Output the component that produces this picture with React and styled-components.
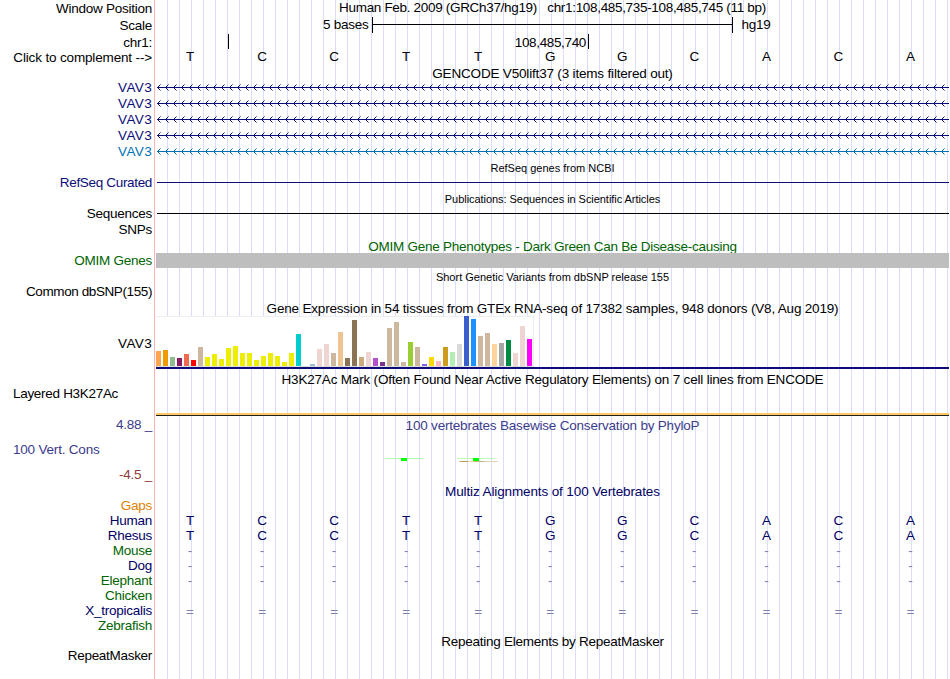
import React from "react";
import styled, { createGlobalStyle } from "styled-components";

const GlobalStyle = createGlobalStyle`
  body {
    margin: 0;
    background: #fff;
    font-family: "Liberation Sans", Arial, Helvetica, sans-serif;
    font-size: 13.5px;
    color: #000;
  }
`;

const Browser = styled.main`
  width: 949px;
  height: 679px;
  overflow: hidden;
  background: linear-gradient(#ffb4b4, #ffb4b4) 154px 0 / 1px 100% no-repeat,
    repeating-linear-gradient(to right, #dcdcff 0 1px, transparent 1px 12px)
      167px 0 / 782px 100% no-repeat;
`;

const Row = styled.div`
  display: grid;
  grid-template-columns: 156px 793px;
  height: ${p => p.$h}px;
  line-height: ${p => p.$h}px;
  white-space: pre;
`;

const Label = styled.div`
  padding: 0 4px 0 13px;
  text-align: ${p => (p.$left ? "left" : "right")};
  color: ${p => p.$color || "#000"};
  letter-spacing: ${p => p.$ls ?? -0.25}px;
  ${p => p.$lh && `line-height: ${p.$lh}px;`}
`;

const Title = styled.div`
  grid-column: 2;
  text-align: center;
  color: ${p => p.$color || "#000"};
  font-size: ${p => (p.$small ? 11 : 13.5)}px;
  letter-spacing: ${p => p.$ls || 0}px;
  ${p => p.$lh && `line-height: ${p.$lh}px;`}
`;

const Cells = styled.div`
  display: grid;
  grid-template-columns: repeat(11, 72.05px);
  margin-left: -2px;
  text-align: center;
  color: ${p => p.$color || "#000"};
  ${p => p.$lh && `line-height: ${p.$lh}px;`}
`;

const ScaleTrack = styled.div`
  display: flex;
  align-items: flex-start;
  padding-left: 167px;
  line-height: 15px;
  letter-spacing: -0.25px;
`;

const ScaleBar = styled.div`
  width: 359px;
  height: 16px;
  margin: 0 9px 0 3px;
  border: solid #000;
  border-width: 0 1px;
  background: linear-gradient(#000, #000) 0 7px / 100% 1px no-repeat;
`;

const Ruler = styled.div`
  display: flex;
  align-items: flex-start;
  padding-left: 72px;
`;

const Tick = styled.div`
  width: 1px;
  height: 15px;
  background: #000;
`;

const RulerLabel = styled.div`
  width: 357px;
  margin-right: 2px;
  text-align: right;
  line-height: 18px;
  letter-spacing: -0.35px;
`;

const Line = styled.div`
  align-self: start;
  height: 1px;
  margin: 6px 0 0 1px;
  background: ${p => p.$color};
`;

const OmimBar = styled.div`
  background: #bebebe;
`;

const Gtex = styled.div`
  display: flex;
  flex-direction: column;
  border-bottom: 2px solid #0c0c78;
  height: 51px;
`;

const GtexPlot = styled.div`
  display: flex;
  align-items: flex-end;
  gap: 2px;
  width: 378px;
  height: 50px;
  border-bottom: 1px solid #ddd;
  background: #fff;
  box-shadow: inset 0 1px #eee, inset -1px 0 #eee;
`;

const Bar = styled.div`
  width: 5px;
  height: ${p => p.$h}px;
  background: ${p => p.$color};
`;

const H3kLine = styled.div`
  height: 2px;
  margin: 13px 0 0 156px;
  background: #ffc864;
  border-bottom: 1px solid #222;
`;

const Gap = styled.div`
  height: ${p => p.$h}px;
`;

const Wiggle = styled.svg`
  display: block;
  margin-left: 156px;
`;

const NAVY = "#0c0c78";
const GREEN = "#006400";
const BLUE = "#000064";
const YELLOW = "#eeee00";
const TAN = "#cdb79e";
const ROSE = "#eed5d2";

const bases = "TCCTTGGCACA".split("");

const transcripts = [NAVY, NAVY, NAVY, NAVY, "#0072b2"];

const brain = [9, 12, 7, 18, 20, 13, 13, 6, 10, 13, 10, 4, 13];

const tissues = [
  [15, "#ffa54f"],
  [16, "#ee9a00"],
  [9, "#8fbc8f"],
  [8, "#8b1c62"],
  [12, "#ee6a50"],
  [6, "#ff0000"],
  [19, TAN],
  ...brain.map(h => [h, YELLOW]),
  [32, "#00cdcd"],
  [0, "#ee82ee"],
  [2, "#9ac0cd"],
  [17, ROSE],
  [22, ROSE],
  [13, TAN],
  [34, "#eec591"],
  [8, "#8b7355"],
  [46, "#8b7355"],
  [9, "#cdaa7d"],
  [14, ROSE],
  [8, "#b452cd"],
  [4, "#7a378b"],
  [38, TAN],
  [44, TAN],
  [4, TAN],
  [24, "#9acd32"],
  [19, TAN],
  [2, "#7a67ee"],
  [9, "#ffd700"],
  [5, "#ffb6c1"],
  [19, "#cd9b1d"],
  [14, "#b4eeb4"],
  [22, "#d9d9d9"],
  [50, "#3a5fcd"],
  [47, "#1e90ff"],
  [30, TAN],
  [33, TAN],
  [22, "#ffd39b"],
  [23, "#a6a6a6"],
  [26, "#008b45"],
  [13, ROSE],
  [40, ROSE],
  [27, "#ff00ff"],
];

const species = [
  { name: "Human", color: BLUE, cells: bases },
  { name: "Rhesus", color: BLUE, cells: bases },
  { name: "Mouse", color: GREEN, cells: bases.map(() => "-") },
  { name: "Dog", color: BLUE, cells: bases.map(() => "-") },
  { name: "Elephant", color: GREEN, cells: bases.map(() => "-") },
  { name: "Chicken", color: GREEN, cells: [] },
  { name: "X_tropicalis", color: BLUE, cells: bases.map(() => "="), lh: 17 },
  { name: "Zebrafish", color: GREEN, cells: [] },
];

// Intron line with strand arrows every 8px
const Intron = ({ color, id }) => (
  <svg width="793" height="16" shapeRendering="crispEdges">
    <defs>
      <pattern id={id} width="8" height="16" patternUnits="userSpaceOnUse">
        <path
          d="M2 6h1v1h-1zM3 5h1v1h-1zM2 8h1v1h-1zM3 9h1v1h-1z"
          fill={color}
        />
        <path d="M4 4h1v1h-1zM4 10h1v1h-1z" fill={color} opacity="0.5" />
      </pattern>
    </defs>
    <rect x="1" y="7" width="792" height="1" fill={color} />
    <rect width="793" height="16" fill={`url(#${id})`} />
  </svg>
);

const TitleRow = ({ h, children, ...rest }) => (
  <Row $h={h}>
    <Title {...rest}>{children}</Title>
  </Row>
);

const App = () => (
  <>
    <GlobalStyle />
    <Browser>
      <Row $h={17}>
        <Label>Window Position</Label>
        <Title $ls={-0.32} $lh={15}>
          {"Human Feb. 2009 (GRCh37/hg19)   chr1:108,485,735-108,485,745 (11 bp)"}
        </Title>
      </Row>
      <Row $h={17}>
        <Label>Scale</Label>
        <ScaleTrack>
          <span>5 bases</span>
          <ScaleBar />
          <span>hg19</span>
        </ScaleTrack>
      </Row>
      <Row $h={16}>
        <Label $lh={18}>chr1:</Label>
        <Ruler>
          <Tick />
          <RulerLabel>108,485,740</RulerLabel>
          <Tick />
        </Ruler>
      </Row>
      <Row $h={15}>
        <Label $ls={-0.15}>{"Click to complement -->"}</Label>
        <Cells $lh={13}>
          {bases.map((base, i) => (
            <span key={i}>{base}</span>
          ))}
        </Cells>
      </Row>
      <TitleRow h={15} $ls={-0.18} $lh={17}>
        GENCODE V50lift37 (3 items filtered out)
      </TitleRow>
      {transcripts.map((color, i) => (
        <Row $h={16} key={i}>
          <Label $color={color} $ls={0.35}>
            VAV3
          </Label>
          <Intron color={color} id={`strand${i}`} />
        </Row>
      ))}
      <TitleRow h={16} $small>
        RefSeq genes from NCBI
      </TitleRow>
      <Row $h={15}>
        <Label $color={NAVY} $ls={-0.33} $lh={13}>
          RefSeq Curated
        </Label>
        <Line $color={NAVY} />
      </Row>
      <TitleRow h={16} $small $ls={-0.05}>
        Publications: Sequences in Scientific Articles
      </TitleRow>
      <Row $h={15}>
        <Label $lh={13}>Sequences</Label>
        <Line $color="#000" />
      </Row>
      <Row $h={16}>
        <Label>SNPs</Label>
      </Row>
      <TitleRow h={15} $color={GREEN} $ls={-0.25} $lh={17}>
        OMIM Gene Phenotypes - Dark Green Can Be Disease-causing
      </TitleRow>
      <Row $h={15}>
        <Label $color={GREEN} $ls={-0.25}>
          OMIM Genes
        </Label>
        <OmimBar />
      </Row>
      <TitleRow h={16} $small $lh={18}>
        Short Genetic Variants from dbSNP release 155
      </TitleRow>
      <Row $h={16}>
        <Label $ls={-0.4}>Common dbSNP(155)</Label>
      </Row>
      <TitleRow h={16} $ls={-0.19} $lh={18}>
        Gene Expression in 54 tissues from GTEx RNA-seq of 17382 samples, 948
        donors (V8, Aug 2019)
      </TitleRow>
      <Row $h={55}>
        <Label $ls={0.35}>VAV3</Label>
        <Gtex>
          <GtexPlot>
            {tissues.map(([h, color], i) => (
              <Bar key={i} $h={h} $color={color} />
            ))}
          </GtexPlot>
        </Gtex>
      </Row>
      <TitleRow h={16} $ls={-0.19} $lh={18}>
        H3K27Ac Mark (Often Found Near Active Regulatory Elements) on 7 cell
        lines from ENCODE
      </TitleRow>
      <Row $h={13}>
        <Label $left $ls={-0.3}>
          Layered H3K27Ac
        </Label>
      </Row>
      <H3kLine />
      <Gap $h={2} />
      <Row $h={15}>
        <Label $color="#3c3c8c" $lh={13}>
          4.88 _
        </Label>
        <Title $color="#3c3c8c" $ls={-0.2}>
          100 vertebrates Basewise Conservation by PhyloP
        </Title>
      </Row>
      <Gap $h={9} />
      <Row $h={16}>
        <Label $left $color="#3c3c8c" $ls={-0.2}>
          100 Vert. Cons
        </Label>
      </Row>
      <Wiggle width="793" height="9" shapeRendering="crispEdges">
        <rect x="229" width="38" height="1" fill="#b4ffb4" />
        <rect x="301" width="38" height="1" fill="#b4ffb4" />
        <rect x="303" y="3" width="39" height="1" fill="#ddd5b0" />
        <rect x="304" y="3" width="8" height="1" fill="#b4a050" />
        <rect x="318" y="3" width="10" height="1" fill="#c4b478" />
        <rect x="245" width="6" height="3" fill="#00ff00" />
        <rect x="317" width="6" height="3" fill="#00ff00" />
      </Wiggle>
      <Row $h={15}>
        <Label $color="#8c3c3c">-4.5 _</Label>
      </Row>
      <TitleRow h={16} $color={BLUE} $ls={-0.12} $lh={19}>
        Multiz Alignments of 100 Vertebrates
      </TitleRow>
      <Row $h={15}>
        <Label $color="#e08200">Gaps</Label>
      </Row>
      {species.map(({ name, color, cells, lh }) => (
        <Row $h={15} key={name}>
          <Label $color={color}>{name}</Label>
          <Cells $color={cells === bases ? BLUE : "#8080b0"} $lh={lh}>
            {cells.map((cell, i) => (
              <span key={i}>{cell}</span>
            ))}
          </Cells>
        </Row>
      ))}
      <TitleRow h={16} $ls={-0.26} $lh={18}>
        Repeating Elements by RepeatMasker
      </TitleRow>
      <Row $h={14}>
        <Label $ls={-0.3}>RepeatMasker</Label>
      </Row>
    </Browser>
  </>
);

export default App;
